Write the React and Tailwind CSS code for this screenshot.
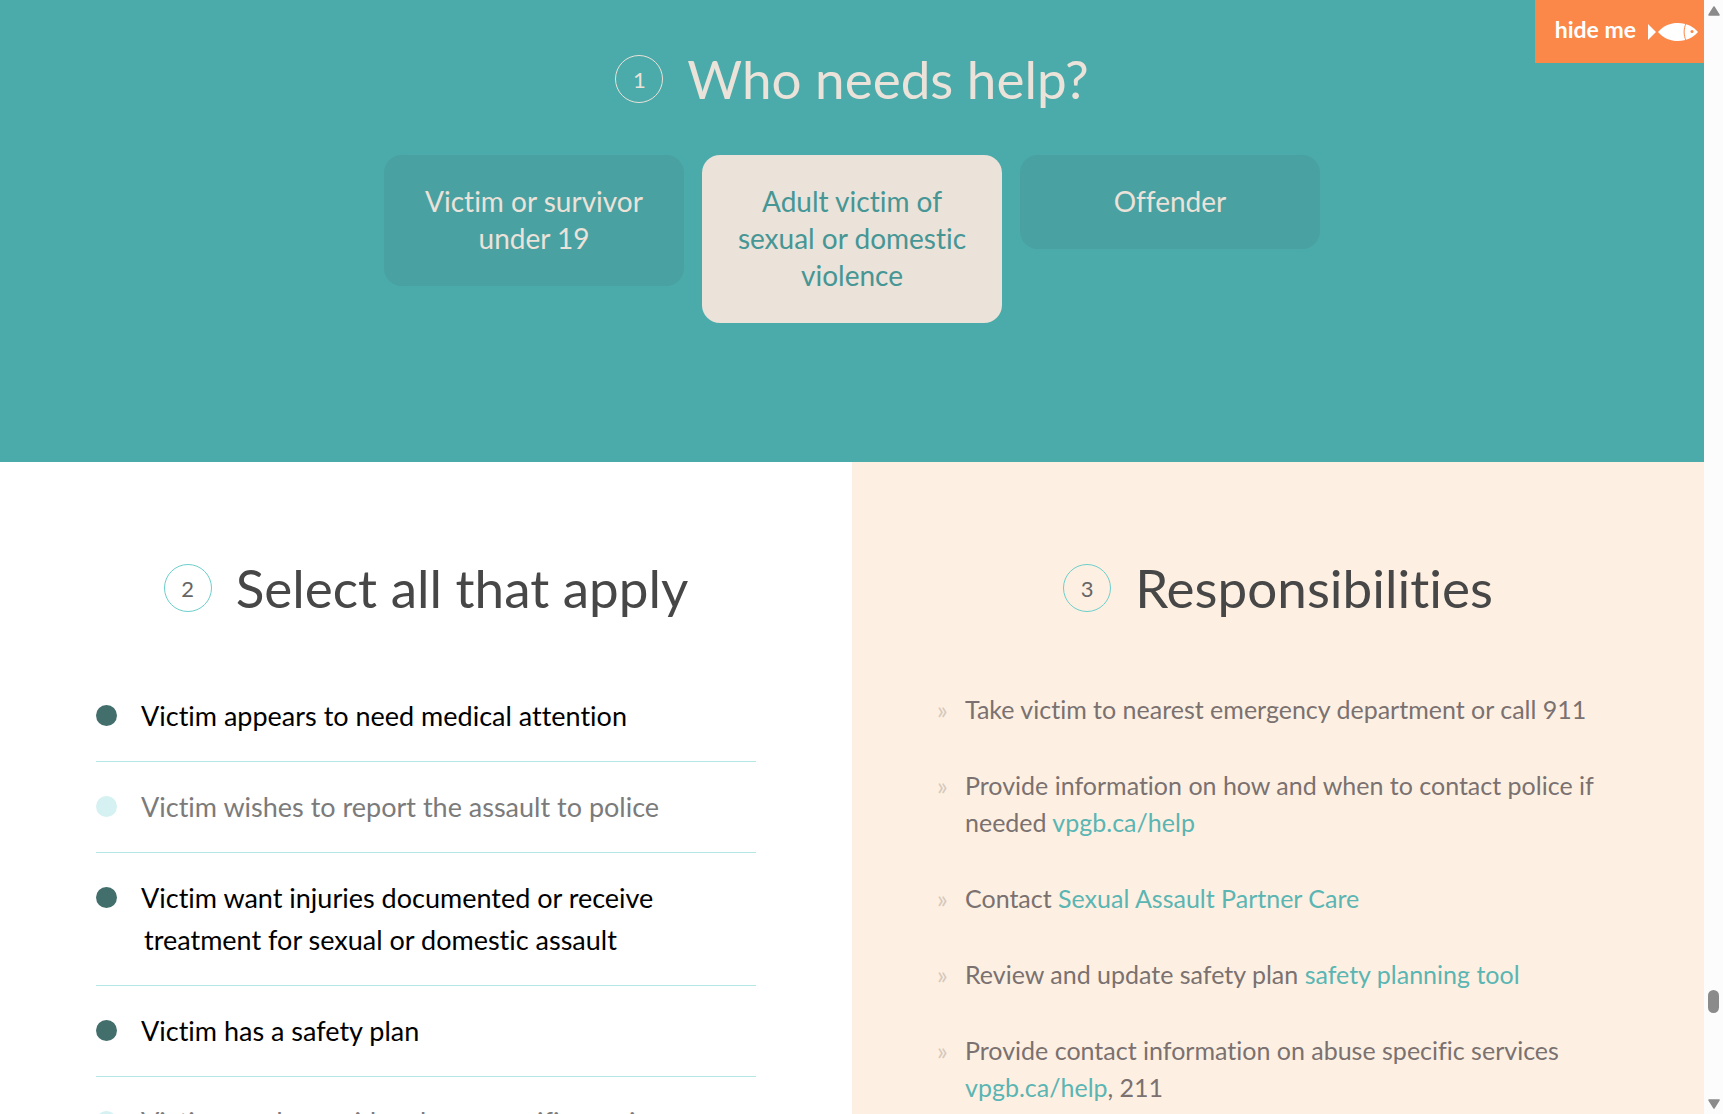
const people = [
  { label: "Victim or survivor under 19", active: false },
  { label: "Adult victim of sexual or domestic violence", active: true },
  { label: "Offender", active: false },
];

const needs = [
  { label: "Victim appears to need medical attention", on: true },
  { label: "Victim wishes to report the assault to police", on: false },
  { label: "Victim want injuries documented or receive treatment for sexual or domestic assault", on: true },
  { label: "Victim has a safety plan", on: true },
  { label: "Victim needs provider abuse specific services", on: false },
];

function Fish() {
  return (
    <svg viewBox="0 0 50 18" className="mt-[5px] h-[18px] w-[50px]" aria-hidden="true">
      <path d="M0 1 L8 9 L0 17 Z" fill="#fff" />
      <path d="M10 9 C16 2.5 22 0 30 0 C39 0 45 3.5 50 9 C45 14.5 39 18 30 18 C22 18 16 15.5 10 9 Z" fill="#fff" />
      <path d="M38 0.5 C35.5 6 35.5 12 38 17.5" fill="none" stroke="#fb8748" strokeWidth="1" />
      <circle cx="44" cy="8.5" r="1.5" fill="#fb8748" />
    </svg>
  );
}

function StepHeading({ number, children, light }) {
  return (
    <div className="flex items-center justify-center gap-6">
      <span
        className={
          light
            ? "flex size-12 items-center justify-center rounded-full border border-[#ebe2d9] text-[22px] text-[#ebe2d9]"
            : "flex size-12 items-center justify-center rounded-full border border-[#6ccfcb] text-[22px] text-[#666]"
        }
      >
        {number}
      </span>
      <h2 className={light ? "text-[53px] leading-12 text-[#ebe2d9]" : "text-[53px] leading-12 text-[#474747]"}>{children}</h2>
    </div>
  );
}

function Duty({ children }) {
  return (
    <li className="flex gap-[18px]">
      <span className="w-[10px] text-[#d6c8bd]" aria-hidden="true">»</span>
      <p className="flex-1">{children}</p>
    </li>
  );
}

function Link({ children }) {
  return <a href="#" className="text-[#5ab5b3]">{children}</a>;
}

function Scrollbar() {
  return (
    <div className="flex w-[19px] shrink-0 flex-col items-center bg-[#fcfcfc] pt-[6px] pb-[5px]" aria-hidden="true">
      <svg viewBox="0 0 12 10" className="h-[10px] w-3">
        <path d="M6 1 L11 9 H1 Z" fill="#8b8b8b" stroke="#8b8b8b" strokeWidth="1.5" strokeLinejoin="round" />
      </svg>
      <div className="flex-[974]" />
      <div className="h-[23px] w-[11px] rounded-full bg-[#8b8b8b]" />
      <div className="flex-[86]" />
      <svg viewBox="0 0 12 10" className="h-[10px] w-3">
        <path d="M6 9 L11 1 H1 Z" fill="#8b8b8b" stroke="#8b8b8b" strokeWidth="1.5" strokeLinejoin="round" />
      </svg>
    </div>
  );
}

export default function App() {
  return (
    <div className='flex h-screen overflow-hidden bg-white font-["Lato",sans-serif] [font-variant-ligatures:none]'>
      <main className="relative flex min-w-0 flex-1 flex-col">
        <button
          type="button"
          className="absolute top-0 right-0 flex h-[63px] items-center gap-3 bg-[#fb8748] pr-[6px] pb-[5px] pl-5 text-[23px] font-bold text-white"
        >
          hide me
          <Fish />
        </button>

        <section className="shrink-0 bg-[#4aabaa] pt-[55px] pb-[139px]">
          <StepHeading number="1" light>Who needs help?</StepHeading>
          <div className="mt-[52px] flex items-start justify-center gap-[18px]">
            {people.map((p) => (
              <button
                key={p.label}
                type="button"
                aria-pressed={p.active}
                className={
                  p.active
                    ? "w-[300px] rounded-[18px] bg-[#ebe2d9] px-8 pt-7 pb-[29px] text-[28px] leading-[37px] text-[#459695]"
                    : "w-[300px] rounded-[18px] bg-[#49a1a1] px-8 pt-7 pb-[29px] text-[28px] leading-[37px] text-[#ebe2d9]"
                }
              >
                {p.label}
              </button>
            ))}
          </div>
        </section>

        <div className="grid flex-1 grid-cols-2">
          <section className="px-24 pt-[102px]">
            <StepHeading number="2">Select all that apply</StepHeading>
            <ul className="mt-[59px]">
              {needs.map((n) => (
                <li key={n.label} className="border-b border-[#b3e6e4]">
                  <label
                    className={
                      n.on
                        ? "flex gap-6 py-6 text-[27px] leading-[42px] text-black"
                        : "flex gap-6 py-6 text-[27px] leading-[42px] text-[#7b7b7b]"
                    }
                  >
                    <input
                      type="checkbox"
                      defaultChecked={n.on}
                      className="mt-[10px] size-[21px] shrink-0 appearance-none rounded-full bg-[#d5f1f2] checked:bg-[#426e6c]"
                    />
                    <span className="pl-[3px] -indent-[3px]">{n.label}</span>
                  </label>
                </li>
              ))}
            </ul>
          </section>

          <section className="bg-[#fdf0e2] pt-[102px] pr-24 pl-[85px]">
            <div className="-mr-24 -ml-[85px]">
              <StepHeading number="3">Responsibilities</StepHeading>
            </div>
            <ul className="mt-[79px] flex flex-col gap-[39px] text-[25px] leading-[37px] text-[#7a7170]">
              <Duty>Take victim to nearest emergency department or call 911</Duty>
              <Duty>Provide information on how and when to contact police if needed <Link>vpgb.ca/help</Link></Duty>
              <Duty>Contact <Link>Sexual Assault Partner Care</Link></Duty>
              <Duty>Review and update safety plan <Link>safety planning tool</Link></Duty>
              <Duty>Provide contact information on abuse specific services <Link>vpgb.ca/help</Link>, 211</Duty>
            </ul>
          </section>
        </div>
      </main>
      <Scrollbar />
    </div>
  );
}
